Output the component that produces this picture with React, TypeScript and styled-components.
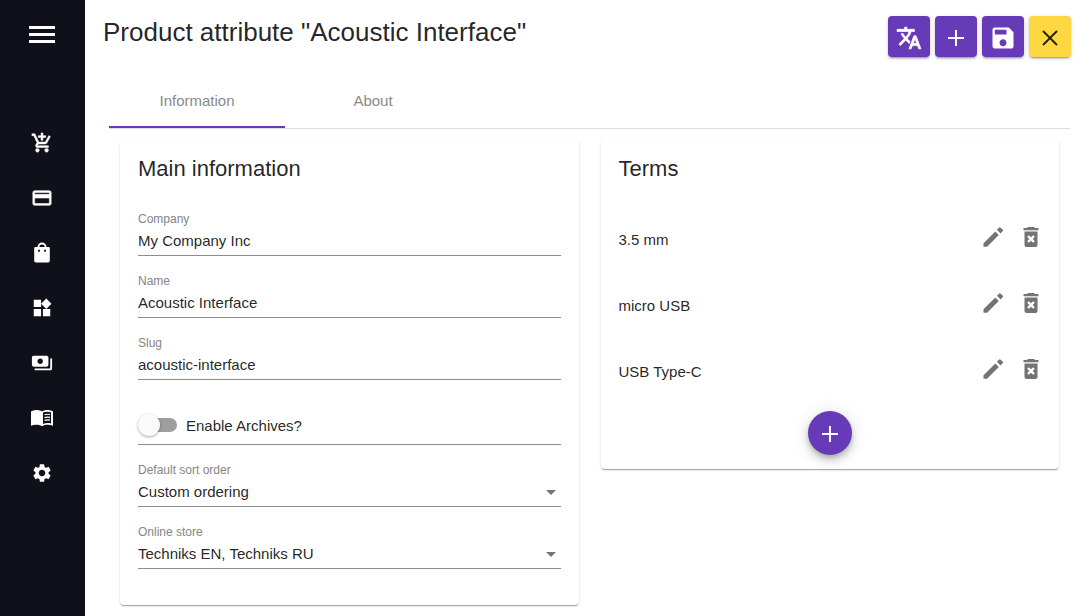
import React from "react";
import styled, { createGlobalStyle, css } from "styled-components";
import {
  MdAddShoppingCart,
  MdCreditCard,
  MdWidgets,
  MdPayments,
  MdSettings,
  MdTranslate,
  MdSave,
} from "react-icons/md";

const purple = "#673ab7";
const amber = "#ffd740";
const night = "#10101a";

const GlobalStyle = createGlobalStyle`
  *, *::before, *::after { box-sizing: border-box; }
  body {
    margin: 0;
    background: #fff;
    color: rgba(0, 0, 0, 0.87);
    font-family: "Liberation Sans", Arial, sans-serif;
    font-size: 15px;
  }
  button, input, select { font: inherit; color: inherit; }
  button { cursor: pointer; }
`;

const Shell = styled.div`
  display: flex;
  min-height: 100vh;
`;

const Sidebar = styled.nav`
  flex: 0 0 85px;
  display: flex;
  flex-direction: column;
  align-items: center;
  padding: 26px 2px 0 0;
  background: ${night};
  color: #fff;
`;

const MenuButton = styled.button`
  display: flex;
  padding: 0;
  border: 0;
  background: none;
`;

const NavList = styled.ul`
  display: flex;
  flex-direction: column;
  gap: 33px;
  margin: 89px 0 0;
  padding: 0;
  list-style: none;
`;

const NavLink = styled.a<{ $bold?: boolean }>`
  display: flex;
  color: #fff;

  path:not([fill="none"]) {
    stroke: currentColor;
    stroke-width: ${(p) => (p.$bold ? "0.6px" : "0")};
  }
`;

const Page = styled.main`
  flex: 1;
  min-width: 0;
  padding: 16px 20px 11px 18px;
`;

const Header = styled.header`
  display: flex;
  justify-content: space-between;
  align-items: flex-start;
`;

const Title = styled.h1`
  margin: 0;
  font-size: 26px;
  line-height: 32px;
  font-weight: 400;
`;

const Actions = styled.div`
  display: flex;
  gap: 5px;
`;

const ActionButton = styled.button<{ $tone?: "amber" }>`
  display: flex;
  align-items: center;
  justify-content: center;
  width: 42px;
  height: 41px;
  padding: 2px 0 0;
  border: 0;
  border-radius: 4px;
  background: ${(p) => (p.$tone === "amber" ? amber : purple)};
  color: ${(p) => (p.$tone === "amber" ? "rgba(0, 0, 0, 0.87)" : "#fff")};
  box-shadow: 0 3px 1px -2px rgba(0, 0, 0, 0.2), 0 2px 2px 0 rgba(0, 0, 0, 0.14),
    0 1px 5px 0 rgba(0, 0, 0, 0.12);
`;

const TranslateIcon = styled(MdTranslate)`
  path:not([fill="none"]) {
    stroke: currentColor;
    stroke-width: 0.7px;
  }
`;

const Tabs = styled.div`
  display: flex;
  margin: 17px 1px 0 6px;
  border-bottom: 1px solid #dcdcdc;
`;

const Tab = styled.button<{ $active?: boolean }>`
  width: 176px;
  height: 54px;
  padding: 0;
  border: 0;
  border-bottom: 2px solid ${(p) => (p.$active ? purple : "transparent")};
  background: none;
  color: #8a8a8a;
`;

const Columns = styled.div`
  display: grid;
  grid-template-columns: 1fr 1fr;
  align-items: start;
  gap: 22px;
  padding: 11px 12px 0 17px;
`;

const Card = styled.section`
  padding: 16px 18px 14px;
  border-radius: 4px;
  background: #fff;
  box-shadow: 0 2px 1px -1px rgba(0, 0, 0, 0.2), 0 1px 1px 0 rgba(0, 0, 0, 0.14),
    0 1px 3px 0 rgba(0, 0, 0, 0.12);
`;

const CardTitle = styled.h2`
  margin: 0 0 12px;
  font-size: 22px;
  line-height: 26px;
  font-weight: 400;
`;

const Form = styled.form`
  display: flex;
  flex-direction: column;
  padding-bottom: 22px;
`;

const Field = styled.div`
  display: flex;
  flex-direction: column;
  padding-top: 18px;
`;

const Label = styled.label`
  font-size: 12px;
  line-height: 14px;
  color: #858585;
`;

const control = css`
  width: 100%;
  height: 30px;
  padding: 0;
  border: 0;
  border-bottom: 1px solid #8c8c8c;
  border-radius: 0;
  background: transparent;
  outline: none;
`;

const TextInput = styled.input`
  ${control}
`;

const SelectWrap = styled.div`
  display: grid;
  align-items: center;

  & > * {
    grid-area: 1 / 1;
  }

  &::after {
    content: "";
    grid-area: 1 / 1;
    justify-self: end;
    margin-right: 5px;
    border: 5px solid transparent;
    border-top-color: #757575;
    border-bottom: 0;
    pointer-events: none;
  }
`;

const Select = styled.select`
  ${control}
  appearance: none;
`;

const SwitchRow = styled.label`
  display: flex;
  align-items: center;
  gap: 9px;
  height: 65px;
  padding-top: 26px;
  border-bottom: 1px solid #8c8c8c;
`;

const Switch = styled.input`
  appearance: none;
  display: flex;
  align-items: center;
  width: 39px;
  height: 14px;
  margin: 0;
  border-radius: 8px;
  background: linear-gradient(#9e9e9e, #9e9e9e) right / 36px 100% no-repeat;

  &::before {
    content: "";
    flex: none;
    width: 22px;
    height: 22px;
    border-radius: 50%;
    background: #fafafa;
    box-shadow: 0 1px 3px rgba(0, 0, 0, 0.35);
  }

  &:checked::before {
    margin-left: 17px;
  }
`;

const TermList = styled.ul`
  margin: 0;
  padding: 11px 0 0;
  list-style: none;
`;

const Term = styled.li`
  display: flex;
  align-items: center;
  gap: 20px;
  height: 66px;
  padding: 0 2px 2px 0;
`;

const TermName = styled.span`
  flex: 1;
  padding-top: 5px;
`;

const IconButton = styled.button`
  display: flex;
  padding: 0;
  border: 0;
  background: none;
  color: #737373;
`;

const FabRow = styled.div`
  display: flex;
  justify-content: center;
  padding-top: 8px;
`;

const Fab = styled.button`
  display: flex;
  align-items: center;
  justify-content: center;
  width: 44px;
  height: 44px;
  padding: 2px 0 0;
  border: 0;
  border-radius: 50%;
  background: ${purple};
  color: #fff;
  box-shadow: 0 3px 5px -1px rgba(0, 0, 0, 0.2), 0 6px 10px 0 rgba(0, 0, 0, 0.14),
    0 1px 18px 0 rgba(0, 0, 0, 0.12);
`;

const MenuIcon = () => (
  <svg width="26" height="17" viewBox="0 0 26 17" fill="currentColor">
    <path d="M0 0h26v3H0zM0 7h26v3H0zM0 14h26v3H0z" />
  </svg>
);

const BagIcon = ({ size = 22 }: { size?: number }) => (
  <svg width={size} height={size} viewBox="0 0 22 22">
    <path d="M7.500 6V4.500a3.500 3 0 0 1 7 0V6" fill="none" stroke="currentColor" strokeWidth="1.8" />
    <path
      fill="currentColor"
      fillRule="evenodd"
      d="M4.500 5h13a1.300 1.300 0 0 1 1.300 1.300v12.400a1.800 1.800 0 0 1-1.800 1.800H5a1.800 1.800 0 0 1-1.800-1.800V6.300A1.300 1.300 0 0 1 4.500 5zM8 7.500a.9.900 0 0 0-.9.900v.6a.9.900 0 0 0 1.800 0v-.6A.9.900 0 0 0 8 7.500zm6 0a.9.900 0 0 0-.9.900v.6a.9.900 0 0 0 1.800 0v-.6A.9.900 0 0 0 14 7.500z"
    />
  </svg>
);

const BookIcon = ({ size = 22 }: { size?: number }) => (
  <svg width={size} height={size} viewBox="0 0 22 22">
    <path
      fill="currentColor"
      d="M0 4.500C3.500 2.500 8 2.500 11 4.500c3-2 7.500-2 11 0v14.300c-3.500-1.500-7.500-1.500-11 .4-3.500-1.900-7.500-1.900-11-.4z"
    />
    <path
      fill={night}
      d="M12 5.600c2.300-1.100 5.300-1.200 8-.3v11.200c-2.700-.7-5.700-.5-8 .5z"
    />
    <path
      fill="none"
      stroke="currentColor"
      strokeWidth="1.200"
      d="M13.500 7.800c1.700-.6 3.600-.7 5.500-.3M13.500 10.600c1.700-.6 3.600-.7 5.500-.3M13.500 13.400c1.700-.6 3.600-.7 5.500-.3"
    />
  </svg>
);

const PlusIcon = () => (
  <svg width="16" height="16" viewBox="0 0 16 16" stroke="currentColor" strokeWidth="2">
    <path d="M8 0v16M0 8h16" />
  </svg>
);

const CloseIcon = () => (
  <svg width="16" height="16" viewBox="0 0 16 16" stroke="currentColor" strokeWidth="1.8">
    <path d="M1 1l14 14M15 1L1 15" />
  </svg>
);

const PencilIcon = () => (
  <svg width="20" height="20" viewBox="0 0 20 20" fill="currentColor">
    <path d="M.5 16.200L12.300 4.400l3.500 3.500L4.100 19.700H.5z" />
    <path d="M13.900 2.800L16 .7a1.200 1.200 0 0 1 1.700 0l1.900 1.900a1.200 1.200 0 0 1 0 1.700l-2.100 2.100z" />
  </svg>
);

const TrashIcon = () => (
  <svg width="16" height="20" viewBox="0 0 16 20" fill="currentColor">
    <path d="M5 0h6l1 1h3.500v2.200H.5V1H4z" />
    <path
      fillRule="evenodd"
      d="M1.500 4.600h13V18a2 2 0 0 1-2 2h-9a2 2 0 0 1-2-2zM5.800 8.200L4.200 9.800 6.300 12l-2.100 2.200 1.600 1.600L8 13.700l2.200 2.100 1.600-1.600L9.700 12l2.100-2.200-1.600-1.600L8 10.300z"
    />
  </svg>
);

const navItems = [
  { label: "Orders", Icon: MdAddShoppingCart, bold: true },
  { label: "Pages", Icon: MdCreditCard, bold: true },
  { label: "Products", Icon: BagIcon },
  { label: "Widgets", Icon: MdWidgets },
  { label: "Payments", Icon: MdPayments },
  { label: "Catalog", Icon: BookIcon },
  { label: "Settings", Icon: MdSettings },
];

const terms = ["3.5 mm", "micro USB", "USB Type-C"];

export default function App() {
  return (
    <Shell>
      <GlobalStyle />
      <Sidebar aria-label="Main">
        <MenuButton aria-label="Menu">
          <MenuIcon />
        </MenuButton>
        <NavList>
          {navItems.map(({ label, Icon, bold }) => (
            <li key={label}>
              <NavLink href="#" aria-label={label} $bold={bold}>
                <Icon size={22} />
              </NavLink>
            </li>
          ))}
        </NavList>
      </Sidebar>
      <Page>
        <Header>
          <Title>Product attribute "Acoustic Interface"</Title>
          <Actions>
            <ActionButton aria-label="Translate">
              <TranslateIcon size={26} />
            </ActionButton>
            <ActionButton aria-label="Add">
              <PlusIcon />
            </ActionButton>
            <ActionButton aria-label="Save">
              <MdSave size={28} />
            </ActionButton>
            <ActionButton aria-label="Close" $tone="amber">
              <CloseIcon />
            </ActionButton>
          </Actions>
        </Header>
        <Tabs role="tablist">
          <Tab role="tab" aria-selected="true" $active>
            Information
          </Tab>
          <Tab role="tab" aria-selected="false">
            About
          </Tab>
        </Tabs>
        <Columns>
          <Card>
            <CardTitle>Main information</CardTitle>
            <Form>
              <Field>
                <Label htmlFor="company">Company</Label>
                <TextInput id="company" defaultValue="My Company Inc" />
              </Field>
              <Field>
                <Label htmlFor="name">Name</Label>
                <TextInput id="name" defaultValue="Acoustic Interface" />
              </Field>
              <Field>
                <Label htmlFor="slug">Slug</Label>
                <TextInput id="slug" defaultValue="acoustic-interface" />
              </Field>
              <SwitchRow>
                <Switch type="checkbox" role="switch" />
                Enable Archives?
              </SwitchRow>
              <Field>
                <Label htmlFor="sort">Default sort order</Label>
                <SelectWrap>
                  <Select id="sort">
                    <option>Custom ordering</option>
                  </Select>
                </SelectWrap>
              </Field>
              <Field>
                <Label htmlFor="store">Online store</Label>
                <SelectWrap>
                  <Select id="store">
                    <option>Techniks EN, Techniks RU</option>
                  </Select>
                </SelectWrap>
              </Field>
            </Form>
          </Card>
          <Card>
            <CardTitle>Terms</CardTitle>
            <TermList>
              {terms.map((term) => (
                <Term key={term}>
                  <TermName>{term}</TermName>
                  <IconButton aria-label={`Edit ${term}`}>
                    <PencilIcon />
                  </IconButton>
                  <IconButton aria-label={`Delete ${term}`}>
                    <TrashIcon />
                  </IconButton>
                </Term>
              ))}
            </TermList>
            <FabRow>
              <Fab aria-label="Add term">
                <PlusIcon />
              </Fab>
            </FabRow>
          </Card>
        </Columns>
      </Page>
    </Shell>
  );
}
